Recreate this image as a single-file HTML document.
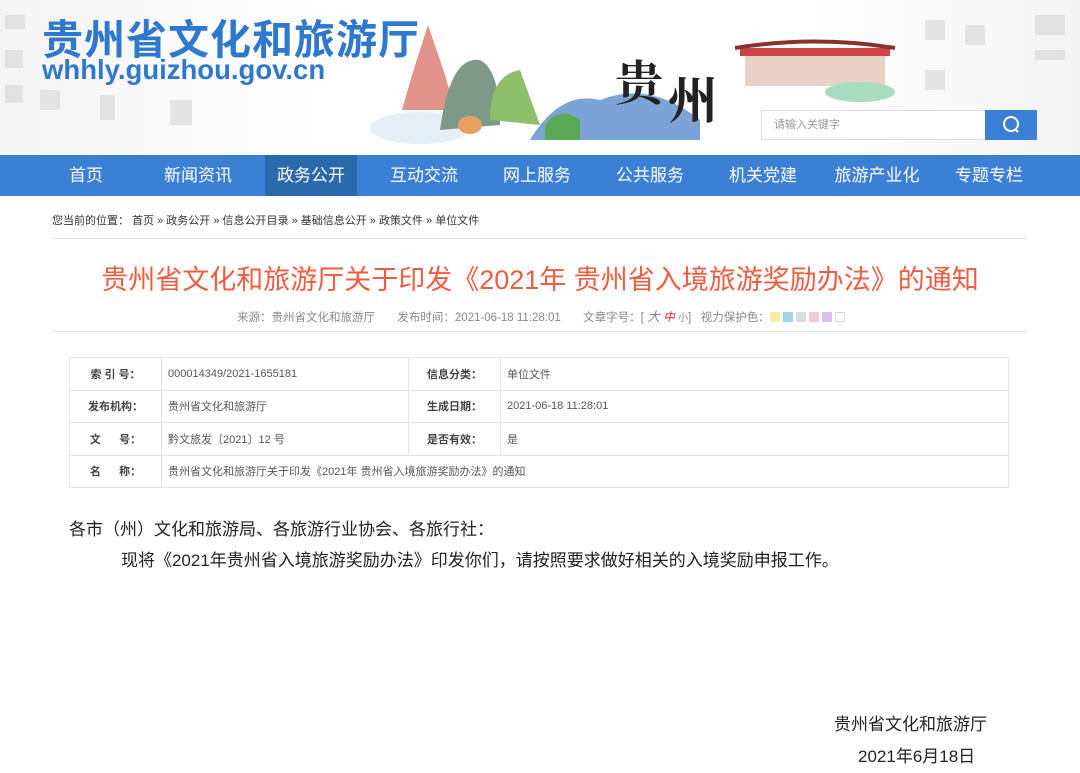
<!DOCTYPE html>
<html><head><meta charset="utf-8"><style>
*{margin:0;padding:0;box-sizing:border-box}
body{width:1080px;height:773px;overflow:hidden;background:#fff;font-family:"Liberation Sans","Noto Sans CJK SC",sans-serif;color:#333;position:relative}
.hdr{position:absolute;left:0;top:0;width:1080px;height:155px;background:linear-gradient(90deg,#f4f4f4,#fff 30%,#fff 75%,#f3f3f3)}
.t1{position:absolute;left:42px;top:6px;font-size:41px;font-weight:bold;color:#2f78d0;letter-spacing:1px;white-space:nowrap}
.t2{position:absolute;left:42px;top:54px;font-size:27.5px;font-weight:bold;color:#2f78d0;white-space:nowrap}
.nav{position:absolute;left:0;top:155px;width:1080px;height:41px;background:#3b80d4}
.nav span{position:absolute;top:0;height:41px;line-height:41px;color:#fff;font-size:17px;text-align:center;width:92px}
.nav .on{background:#2b6aaa}
.srch{position:absolute;left:761px;top:110px;width:225px;height:30px;background:#fff;border:1px solid #dde;font-size:11px;color:#999;line-height:28px;padding-left:12px}
.sbtn{position:absolute;left:985px;top:110px;width:52px;height:30px;background:#3b80d4}
.bc{position:absolute;left:52px;top:212px;font-size:11px;color:#333}
.hr{position:absolute;height:1px;background:#e2e2e2}
h1{position:absolute;left:0;width:1080px;top:258px;text-align:center;font-size:27px;font-weight:normal;color:#ee5c42;white-space:nowrap}
.meta{position:absolute;left:237px;top:306px;font-size:11.5px;color:#888;white-space:nowrap}
.sw{display:inline-block;width:10px;height:10px;vertical-align:-1px;margin-right:3px}
table{position:absolute;left:69px;top:357px;width:940px;border-collapse:collapse;font-size:11px}
td{border:1px solid #e3e3e3;height:32.5px;padding:0 6px;color:#555}
td.l{font-weight:bold;color:#444;text-align:center;width:92px}
.body{position:absolute;left:69px;top:514px;font-size:17px;color:#222;line-height:31px;white-space:nowrap}
.sig{position:absolute;font-size:17px;color:#222;white-space:nowrap}
</style></head><body>
<div class="hdr">
<svg width="1080" height="155" style="position:absolute;left:0;top:0">
<g fill="#d6d6d6" opacity=".6"><rect x="5" y="15" width="20" height="14"/><rect x="5" y="50" width="18" height="18"/><rect x="5" y="85" width="18" height="18"/><rect x="40" y="90" width="20" height="20"/><rect x="100" y="95" width="15" height="25"/><rect x="170" y="100" width="22" height="25"/><rect x="925" y="20" width="20" height="20"/><rect x="965" y="25" width="20" height="20"/><rect x="925" y="70" width="20" height="20"/><rect x="1035" y="15" width="30" height="20"/><rect x="1035" y="50" width="30" height="10"/></g>
<ellipse cx="420" cy="128" rx="50" ry="16" fill="#e6eef5"/>
<polygon points="428,25 412,75 402,110 455,110 445,75" fill="#d9776e" opacity=".8"/>
<path d="M440 130 Q450 55 480 60 Q500 70 500 125 Z" fill="#7d9a88"/>
<path d="M490 120 Q490 75 520 70 L540 125 Z" fill="#8fbf6a"/>
<path d="M530 140 Q560 90 600 100 Q650 80 700 120 L700 140 Z" fill="#5a8ccc" opacity=".8"/>
<path d="M545 125 Q560 105 580 120 L580 140 L545 140Z" fill="#5aaa55"/>
<text x="615" y="100" font-size="48" font-family="Noto Serif CJK SC,serif" font-weight="bold" fill="#222">贵</text>
<text x="668" y="118" font-size="50" font-family="Noto Serif CJK SC,serif" font-weight="bold" fill="#222">州</text>
<rect x="740" y="48" width="150" height="8" fill="#c44"/><rect x="745" y="56" width="140" height="30" fill="#e8d2c8"/><path d="M735 48 Q815 35 895 48" stroke="#8a3030" stroke-width="4" fill="none"/>
<ellipse cx="860" cy="92" rx="35" ry="10" fill="#a8dcc0"/>
<ellipse cx="470" cy="125" rx="12" ry="9" fill="#e8a060"/>
</svg>
<div class="t1">贵州省文化和旅游厅</div>
<div class="t2">whhly.guizhou.gov.cn</div>
<div class="srch">请输入关键字</div>
<div class="sbtn"><svg width="52" height="30"><circle cx="26" cy="14" r="7" stroke="#fff" stroke-width="2" fill="none"/><line x1="30" y1="19" x2="33" y2="22" stroke="#fff" stroke-width="2"/></svg></div>
</div>
<div class="nav">
<span style="left:40px">首页</span><span style="left:152px">新闻资讯</span><span class="on" style="left:265px">政务公开</span><span style="left:378px">互动交流</span><span style="left:491px">网上服务</span><span style="left:604px">公共服务</span><span style="left:717px">机关党建</span><span style="left:830px;width:94px">旅游产业化</span><span style="left:943px">专题专栏</span>
</div>
<div class="bc">您当前的位置： 首页 » 政务公开 » 信息公开目录 » 基础信息公开 » 政策文件 » 单位文件</div>
<div class="hr" style="left:52px;top:238px;width:974px"></div>
<h1>贵州省文化和旅游厅关于印发《2021年 贵州省入境旅游奖励办法》的通知</h1>
<div class="meta">来源：贵州省文化和旅游厅&nbsp;&nbsp;&nbsp;&nbsp;&nbsp;&nbsp;&nbsp;发布时间：2021-06-18 11:28:01&nbsp;&nbsp;&nbsp;&nbsp;&nbsp;&nbsp;&nbsp;文章字号：[ <i style="font-size:13px">大</i> <i style="color:#e22">中</i> <span style="font-size:10px">小</span>]&nbsp;&nbsp;&nbsp;视力保护色：<span class="sw" style="background:#f5f0a0"></span><span class="sw" style="background:#9fd4f0"></span><span class="sw" style="background:#ddd"></span><span class="sw" style="background:#f5c8d8"></span><span class="sw" style="background:#d8c0f0"></span><span class="sw" style="border:1px solid #ddd"></span></div>
<div class="hr" style="left:52px;top:331px;width:974px"></div>
<table>
<tr><td class="l">索 引 号：</td><td style="width:247px">000014349/2021-1655181</td><td class="l">信息分类：</td><td>单位文件</td></tr>
<tr><td class="l">发布机构：</td><td>贵州省文化和旅游厅</td><td class="l">生成日期：</td><td>2021-06-18 11:28:01</td></tr>
<tr><td class="l">文&nbsp;&nbsp;&nbsp;&nbsp;&nbsp;&nbsp;号：</td><td>黔文旅发〔2021〕12 号</td><td class="l">是否有效：</td><td>是</td></tr>
<tr><td class="l">名&nbsp;&nbsp;&nbsp;&nbsp;&nbsp;&nbsp;称：</td><td colspan="3">贵州省文化和旅游厅关于印发《2021年 贵州省入境旅游奖励办法》的通知</td></tr>
</table>
<div class="body">各市（州）文化和旅游局、各旅游行业协会、各旅行社：<br>&nbsp;&nbsp;&nbsp;&nbsp;&nbsp;&nbsp;&nbsp;&nbsp;&nbsp;&nbsp;&nbsp;现将《2021年贵州省入境旅游奖励办法》印发你们，请按照要求做好相关的入境奖励申报工作。</div>
<div class="sig" style="left:834px;top:710px">贵州省文化和旅游厅</div>
<div class="sig" style="left:858px;top:742px">2021年6月18日</div>
</body></html>
